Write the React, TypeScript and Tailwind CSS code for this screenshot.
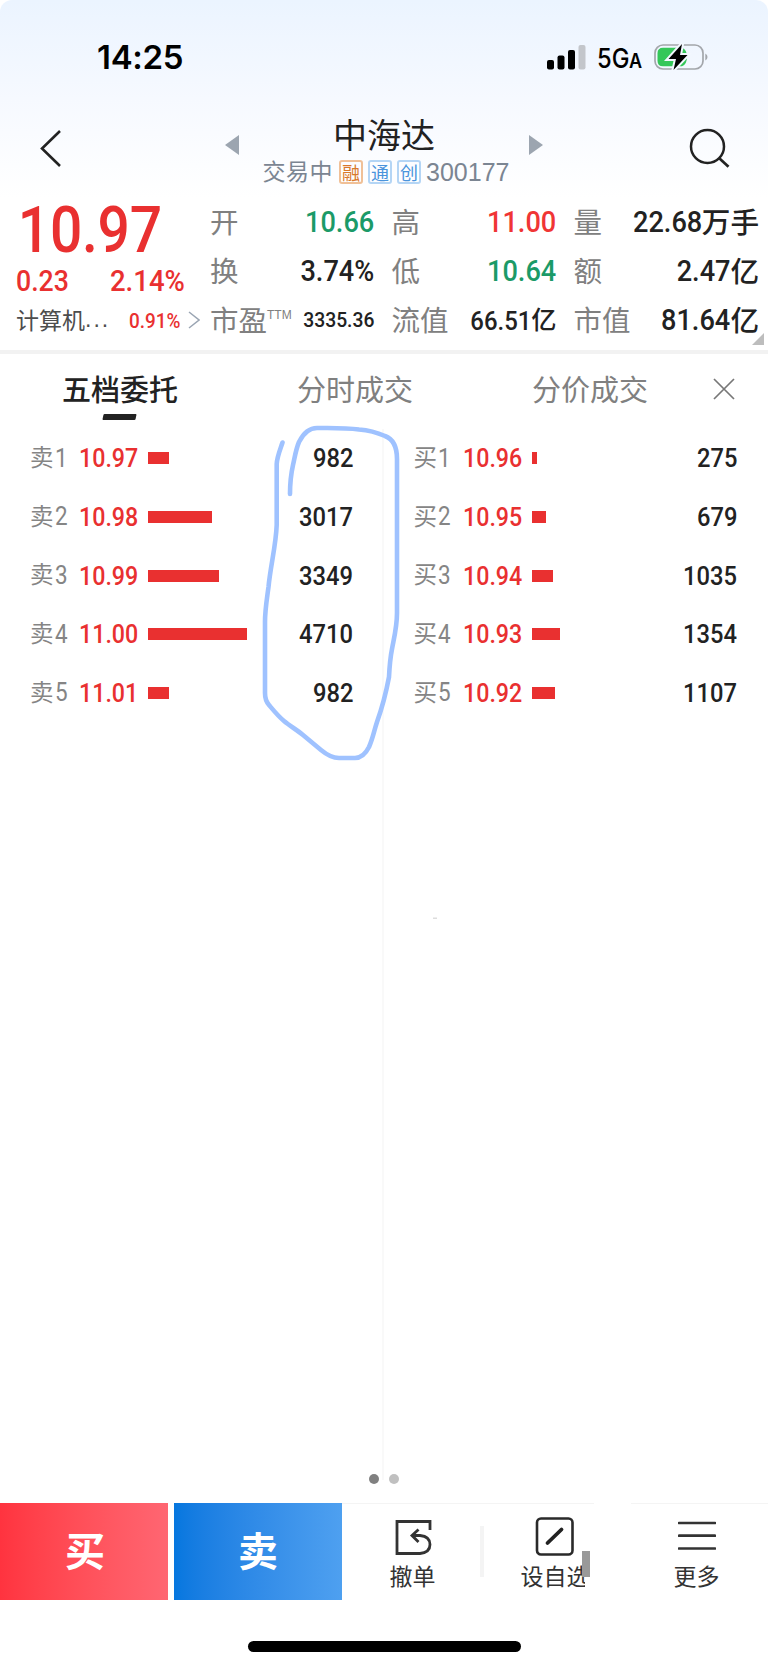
import type { ReactNode } from "react";
import clsx from "clsx";

const CJK = "font-['Noto_Sans_CJK_SC',sans-serif]";

// px of bar per lot in the order book
const BAR_SCALE = 0.0211;

type Level = { label: string; price: string; volume: number };

const SELLS: Level[] = [
  { label: "卖1", price: "10.97", volume: 982 },
  { label: "卖2", price: "10.98", volume: 3017 },
  { label: "卖3", price: "10.99", volume: 3349 },
  { label: "卖4", price: "11.00", volume: 4710 },
  { label: "卖5", price: "11.01", volume: 982 },
];

const BUYS: Level[] = [
  { label: "买1", price: "10.96", volume: 275 },
  { label: "买2", price: "10.95", volume: 679 },
  { label: "买3", price: "10.94", volume: 1035 },
  { label: "买4", price: "10.93", volume: 1354 },
  { label: "买5", price: "10.92", volume: 1107 },
];

// Condensed digits
function Num({ children, className }: { children: ReactNode; className?: string }) {
  return (
    <span className={clsx("block whitespace-nowrap font-[Roboto,sans-serif] font-medium", className)}>
      {children}
    </span>
  );
}

function StatusBar() {
  return (
    <div className="flex h-[114px] items-center justify-between pr-[60px] pl-[97px]">
      <span className="font-[Inter,sans-serif] text-[33px] leading-none font-semibold tracking-[-0.3px] text-black">14:25</span>
      <div className="flex items-center">
        <svg width="39" height="25" viewBox="0 0 39 25">
          <rect x="0" y="15" width="7" height="9.5" rx="2" fill="#000" />
          <rect x="10.5" y="10.5" width="7" height="14" rx="2" fill="#000" />
          <rect x="21" y="5" width="7" height="19.5" rx="2" fill="#000" />
          <rect x="31.5" y="0" width="7" height="24.5" rx="2" fill="#c3c6cb" />
        </svg>
        <span className="mt-[3px] ml-[11px] flex w-[45px] items-baseline font-[Inter,sans-serif] leading-none font-medium text-black">
          <span className="w-[32px] origin-left scale-x-[0.88] text-[27px]">5G</span>
          <span className="origin-left scale-x-[0.9] text-[20px] font-semibold">A</span>
        </span>
        <svg className="ml-[12px]" width="54" height="28" viewBox="0 0 54 28">
          <rect x="1" y="2" width="48" height="24" rx="8" fill="none" stroke="#a3a6ab" strokeWidth="1.7" />
          <path d="M51.3 10.5q2.2 1 2.2 3.5t-2.2 3.5z" fill="#a3a6ab" />
          <path d="M9 4.700h19q5 2 5 9.300t-5 9.300h-19q-5.500 0-5.500-5.500v-7.600q0-5.500 5.500-5.500z" fill="#34c759" />
          <path d="M28 1 14.500 16h7.500L19.500 27 33.500 12h-7.500z" fill="#000" stroke="#f3f8ff" strokeWidth="4" paintOrder="stroke" />
        </svg>
      </div>
    </div>
  );
}

function Tag({ children, orange }: { children: ReactNode; orange?: boolean }) {
  return (
    <span
      className={clsx(
        "flex size-6 items-center justify-center rounded-[3px] border-2 text-[18px] leading-none",
        orange ? "border-[#f0c097] text-[#d9792a]" : "border-[#b4d5f5] text-[#4a94dc]",
      )}
    >
      <span className="-mt-px">{children}</span>
    </span>
  );
}

function NavBar() {
  return (
    <div className="flex h-[84px] items-start pr-[37px] pl-[40px]">
      <svg className="mt-[15px]" width="22" height="38" viewBox="0 0 22 38">
        <path d="M20 2 2 19.500 20 37" fill="none" stroke="#222" strokeWidth="2.6" />
      </svg>
      <div className="ml-[163px] flex w-[318px] items-start justify-between">
        <svg className="mt-[21px]" width="14" height="20" viewBox="0 0 14 20">
          <path d="M14 0v20L0 10z" fill="#9ca5b0" />
        </svg>
        <div className="flex w-[252px] flex-col items-center">
          <div className="h-[45px] text-[34px] leading-[40px] text-[#222]">中海达</div>
          <div className="flex h-[26px] items-center gap-[5px] pl-[4px] whitespace-nowrap text-[23px] leading-none text-[#7b8592]">
            <span className="-mt-[3px] mr-px tracking-[0.5px]">交易中</span>
            <Tag orange>融</Tag>
            <Tag>通</Tag>
            <Tag>创</Tag>
            <span className="font-['Liberation_Sans',sans-serif] text-[25px]">300177</span>
          </div>
        </div>
        <svg className="mt-[21px]" width="14" height="20" viewBox="0 0 14 20">
          <path d="M0 0v20L14 10z" fill="#9ca5b0" />
        </svg>
      </div>
      <svg className="mt-[14px] ml-auto" width="42" height="40" viewBox="0 0 42 40">
        <circle cx="18.500" cy="18.500" r="16.500" fill="none" stroke="#222" strokeWidth="2.500" />
        <path d="m30 30 9.500 8.800" stroke="#222" strokeWidth="2.700" />
      </svg>
    </div>
  );
}

type Stat = { label: string; value: string; unit?: string; color?: string; size?: string; sup?: string };

const STATS: Stat[] = [
  { label: "开", value: "10.66", color: "text-[#1b9a68]" },
  { label: "高", value: "11.00", color: "text-[#f03535]" },
  { label: "量", value: "22.68", unit: "万手" },
  { label: "换", value: "3.74%" },
  { label: "低", value: "10.64", color: "text-[#1b9a68]" },
  { label: "额", value: "2.47", unit: "亿" },
  { label: "市盈", value: "3335.36", size: "text-[21px]", sup: "TTM" },
  { label: "流值", value: "66.51", unit: "亿", size: "text-[26px]" },
  { label: "市值", value: "81.64", unit: "亿" },
];

function Quote() {
  return (
    <div className="relative flex h-[152px] pl-4">
      <div className="flex w-[194px] flex-col text-[#e93030]">
        <Num className="h-[66px] w-[160px] origin-left scale-x-[0.89] pl-[2px] text-[64px] leading-[66px] tracking-[-0.3px]">
          10.97
        </Num>
        <div className="flex h-[34px] w-[169px] justify-between text-[29px] leading-[34px]">
          <Num className="origin-left scale-x-[0.92]">0.23</Num>
          <Num className="origin-right scale-x-[0.95]">2.14%</Num>
        </div>
        <div className="flex h-[44px] w-[184px] items-center">
          <span className="-mt-[2px] flex w-[113px] text-[23px] text-[#4d4d4d]">
            计算机<span className="font-['Liberation_Sans',sans-serif] tracking-[2px]">...</span>
          </span>
          <Num className="mt-[3px] w-[59px] origin-left scale-x-[0.9] text-[21px] leading-none">0.91%</Num>
          <svg width="12" height="18" viewBox="0 0 12 18">
            <path d="m1 1 10 8-10 8" fill="none" stroke="#9aa5b3" strokeWidth="1.500" />
          </svg>
        </div>
      </div>
      <div className="grid h-[147px] grid-cols-[164.500px_165px_185.500px] grid-rows-3 gap-x-[17px]">
        {STATS.map((s) => (
          <div key={s.label} className="flex items-center justify-between">
            <span className="-mt-[3px] flex whitespace-nowrap text-[28.500px] leading-none text-[#808080]">
              {s.label}
              {s.sup && <sup className="top-0 mt-[4px] font-['Liberation_Sans',sans-serif] text-[12px] leading-none">{s.sup}</sup>}
            </span>
            <span
              className={clsx("flex items-center leading-none", s.size ?? "text-[29.500px]", s.color ?? "text-[#222]")}
            >
              <Num className="origin-right scale-x-[0.92]">{s.value}</Num>
              {s.unit && <span className="-mt-[3px] text-[0.97em] leading-none font-medium">{s.unit}</span>}
            </span>
          </div>
        ))}
      </div>
      <svg className="absolute right-1 bottom-[5px]" width="12" height="12" viewBox="0 0 12 12">
        <path d="M12 0v12H0z" fill="#bdbdbd" />
      </svg>
    </div>
  );
}

function Tabs() {
  return (
    <div className="flex h-[75px] items-start pt-[13px] pl-[62px] text-[29px] leading-[42px] text-[#808080]">
      <div className="flex w-[235px] flex-col items-start">
        <span className="font-medium text-[#222]">五档委托</span>
        <span className="mt-[5px] ml-[41px] h-[6px] w-[33px] -skew-x-12 rounded-[1px] bg-[#222]" />
      </div>
      <span className="w-[235px]">分时成交</span>
      <span className="w-[181px]">分价成交</span>
      <svg className="mt-[11px]" width="22" height="22" viewBox="0 0 22 22">
        <path d="m1 1 20 20M21 1 1 21" stroke="#777" strokeWidth="1.700" />
      </svg>
    </div>
  );
}

function Book({ levels, className }: { levels: Level[]; className: string }) {
  return (
    <div className={clsx("flex flex-col", className)}>
      {levels.map((l) => (
        <div key={l.label} className="flex h-[58.700px] items-center">
          <span className="flex w-[49px] items-center text-[23.500px] leading-none text-[#858585]">
            <span className="-mt-[3px]">{l.label[0]}</span>
            <span className="ml-px origin-left scale-x-[0.88] font-[Roboto,sans-serif] text-[25.500px]">{l.label[1]}</span>
          </span>
          <Num className="w-[69px] origin-left scale-x-[0.91] text-[25.500px]">
            <span className="text-[#e93030]">{l.price}</span>
          </Num>
          <span className="h-3 bg-[#e93030]" style={{ width: l.volume * BAR_SCALE }} />
          <Num className="ml-auto origin-right scale-x-[0.93] text-[25.500px] text-[#222]">{l.volume}</Num>
        </div>
      ))}
    </div>
  );
}

function Action({ label, children, className }: { label: string; children: ReactNode; className: string }) {
  return (
    <div className={clsx("flex flex-col items-center", className)}>
      <div className="mt-[13px] h-10">{children}</div>
      <span className="mt-[2px] whitespace-nowrap text-[23px] leading-[32px] text-[#333]">{label}</span>
    </div>
  );
}

function ActionBar() {
  return (
    <div className="flex h-[97px]">
      <div className="flex w-[168px] items-center justify-center bg-linear-to-r from-[#ff333f] to-[#ff6672] pb-[5px] pl-[2px] text-[40px] font-bold text-white">
        买
      </div>
      <div className="ml-[6px] flex w-[168px] items-center justify-center bg-linear-to-r from-[#0577df] to-[#4ea0f0] pb-[5px] text-[40px] font-bold text-white">
        卖
      </div>
      <div className="flex w-[252px] border-t border-[#f4f4f4]">
        <Action label="撤单" className="w-[138px] pl-[3px]">
          <svg className="mt-px ml-[3px]" width="38" height="38" viewBox="0 0 38 38">
            <path
              d="M35 12V3.500H2V35.500H25Q35 34.500 35 26.500T25 17.500H17M23.500 11.500 17 17.500 23.500 24"
              fill="none"
              stroke="#333"
              strokeWidth="2.800"
            />
          </svg>
        </Action>
        <span className="mt-[22px] h-[51px] w-1 bg-[#f4f4f4]" />
        {/* label is cut off on the right by the scroll thumb */}
        <div className="relative w-[110px]">
          <Action label="设自选" className="ml-[31px] w-[80px]">
            <svg width="40" height="40" viewBox="0 0 40 40">
              <rect x="2" y="1.500" width="35.500" height="36" rx="4" fill="none" stroke="#2a2a2a" strokeWidth="2.600" />
              <path d="M12.500 26 26.500 12.500" stroke="#222" strokeWidth="3.800" strokeLinecap="round" />
            </svg>
          </Action>
          <span className="absolute top-[46px] left-[101px] h-[46px] w-5 bg-white" />
          <span className="absolute top-[47px] left-[98px] h-[26px] w-2 bg-[#999]" />
        </div>
      </div>
      <div className="ml-[37px] w-[137px] border-t border-[#f4f4f4]">
        <Action label="更多" className="mr-[6px]">
          <svg width="38" height="38" viewBox="0 0 38 38">
            <path d="M1 6h36M1 18.700h36M1 31.500h36" stroke="#333" strokeWidth="2.700" strokeLinecap="round" />
          </svg>
        </Action>
      </div>
    </div>
  );
}

export default function App() {
  return (
    <main className={clsx("relative flex h-[1667px] w-[768px] flex-col overflow-hidden bg-white", CJK)}>
      <header className="flex h-[350px] flex-col">
        <div className="rounded-t-xl bg-linear-to-b from-[#ebf4ff] via-[#f6f9ff] to-white">
          <StatusBar />
          <NavBar />
        </div>
        <Quote />
      </header>
      <div className="h-1 shrink-0 bg-[#f2f2f2]" />
      <Tabs />

      <section className="flex h-[1051px]">
        <Book levels={SELLS} className="w-[384px] border-r-2 border-[#f9f9f9] pr-[29px] pl-[30px]" />
        <Book levels={BUYS} className="w-[384px] pr-[31px] pl-[29.500px]" />
      </section>
      <div className="flex h-[23px] justify-center gap-[10px]">
        <span className="-mt-[6px] size-[10px] rounded-full bg-[#808080]" />
        <span className="-mt-[6px] size-[10px] rounded-full bg-[#c0c0c0]" />
      </div>
      <ActionBar />
      <div className="mt-[41px] ml-[248px] h-[11px] w-[273px] rounded-full bg-black" />

      {/* Pen mark round the sell volumes */}
      <svg className="pointer-events-none absolute inset-0" width="768" height="1667" viewBox="0 0 768 1667">
        <path
          d="M282.500 442.500C280 450 277 457 276.700 464V525C276 545 270.500 566 268.500 587C266.500 602 265 610 265 622V693C265 698 265.500 701 269 705C274 711 278 716 284 721C290 726 297 730 303 735L321 750C327 755 332 758 339 758H355C362 758 366 753 369 747C373 738 374 731 377 722C382 708 386 693 389 677C389.500 667 390 659 392 649C394 638 397 627 397 613V459C397 446 393 439 385 436C376 432 366 430 359 429.500C345 427.500 330 428 317 428C309 428 303 434 299 442C296 449 295 456 293 465C291 474 290 480 290 494"
          fill="none"
          stroke="#9fc2ff"
          strokeWidth="4.600"
          strokeLinecap="round"
          strokeLinejoin="round"
        />
        <rect x="433" y="917.500" width="4" height="1.500" fill="#ddd" />
      </svg>
    </main>
  );
}
